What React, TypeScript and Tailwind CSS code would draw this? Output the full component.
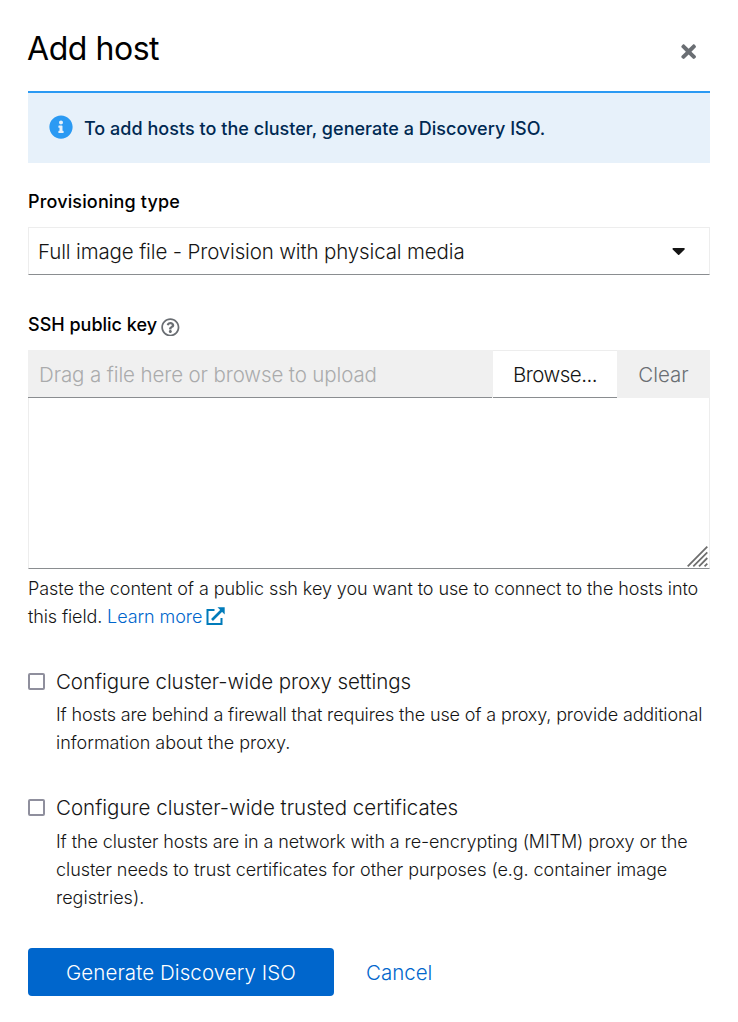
import type { ReactNode } from 'react';
import { FaCaretDown, FaInfoCircle, FaRegQuestionCircle, FaTimes } from 'react-icons/fa';

function ExternalLinkIcon() {
  return (
    <svg className="ml-1 inline-block h-[19px] w-[19px] align-[-3px]" viewBox="0 0 19 19" fill="none">
      <path d="M8.5 3H1.5V17H15.5V11" stroke="#007bba" strokeWidth="2" />
      <path d="M6 13L15.5 3.5" stroke="#007bba" strokeWidth="2.6" />
      <path d="M11.5 0.3H18.7V7.5Z" fill="#007bba" />
    </svg>
  );
}

function ResizeHandle() {
  return (
    <svg className="h-[21px] w-[21px]" viewBox="0 0 21 21" stroke="#6e6e6e" strokeWidth="1.8">
      <path d="M0.7 20.3L20.3 0.7M6.3 20.3L20.3 6.3M12 20.3L20.3 12M17.6 20.3L20.3 17.6" />
    </svg>
  );
}

function CheckboxField({ label, children }: { label: ReactNode; children: ReactNode }) {
  return (
    <label className="grid grid-cols-[17px_1fr] gap-x-[11px]">
      <span className="flex h-[31px] items-center">
        <input
          type="checkbox"
          className="h-[17px] w-[17px] appearance-none rounded-[2px] border-2 border-[#8f8f9d] bg-white"
        />
      </span>
      <span className="text-[20.5px] leading-8">{label}</span>
      <span className="col-start-2 mt-[3px] text-[18px] leading-7">{children}</span>
    </label>
  );
}

export default function App() {
  return (
    <div className="h-[1022px] w-[738px] overflow-hidden whitespace-nowrap bg-white px-7 font-['Inter',sans-serif] font-light text-[#151515]">
      <header className="flex h-[91px] items-start justify-between">
        <h1 className="-ml-px mt-[29px] text-[32px] font-normal leading-10 tracking-[-0.45px] text-black">Add host</h1>
        <button className="mr-[11px] mt-[41px] text-[21.3px] text-[#6a6e73]">
          <FaTimes />
        </button>
      </header>

      <div className="flex h-[72px] border-t-2 border-[#2b9af3] bg-[#e7f1fa] pl-[21px]">
        <FaInfoCircle className="mt-[22px] h-6 w-6 text-[#2b9af3]" />
        <p className="ml-[11px] mt-[22px] text-[18px] font-medium leading-7 tracking-[0.03px] text-[#002952]">
          To add hosts to the cluster, generate a Discovery ISO.
        </p>
      </div>

      <div className="mt-[25px] h-[39px] text-[18px] font-medium leading-7 tracking-[0.15px] text-black">Provisioning type</div>
      <div className="flex h-12 items-center justify-between border border-[#ededed] border-b-[#8a8d90] pl-[9px] pr-5">
        <span className="pt-0.5 text-[20.5px] tracking-[-0.14px]">Full image file - Provision with physical media</span>
        <FaCaretDown className="text-[21.3px]" />
      </div>

      <div className="mt-9 flex h-[39px] text-[18px] font-medium leading-7 text-black">
        SSH public key
        <FaRegQuestionCircle className="ml-1 mt-[6.5px] h-[18.7px] w-[18.7px] text-[#6a6e73]" />
      </div>
      <div className="flex h-12 text-[20.5px] leading-[50px]">
        <div className="w-[464px] border-b border-[#8a8d90] bg-[#f0f0f0] pl-[11px] tracking-[-0.11px] text-[#aaabac]">
          Drag a file here or browse to upload
        </div>
        <div className="w-px bg-[#f0f0f0]" />
        <button className="w-[124px] border-b border-t border-b-[#8a8d90] border-t-[#ededed] bg-white leading-[48px] tracking-[-0.5px]">
          Browse...
        </button>
        <button className="flex-1 bg-[#f0f0f0] text-[#6a6e73]">Clear</button>
      </div>
      <div className="flex h-[171px] items-end justify-end border-x border-b border-x-[#ededed] border-b-[#8a8d90] pb-[1px] pr-[1px]">
        <ResizeHandle />
      </div>
      <p className="mt-[6px] text-[18px] leading-7">
        <span className="tracking-[-0.08px]">
          Paste the content of a public ssh key you want to use to connect to the hosts into
        </span>
        <br />
        <span className="tracking-[-0.12px]">this field. </span>
        <a className="tracking-[-0.08px] text-[#0066cc]">Learn more</a>
        <ExternalLinkIcon />
      </p>

      <div className="mt-[35px]">
        <CheckboxField label={<span className="tracking-[-0.06px]">Configure cluster-wide proxy settings</span>}>
          <span className="tracking-[-0.14px]">
            If hosts are behind a firewall that requires the use of a proxy, provide additional
          </span>
          <br />
          information about the proxy.
        </CheckboxField>
      </div>
      <div className="mt-[35px]">
        <CheckboxField label={<span className="tracking-[0.02px]">Configure cluster-wide trusted certificates</span>}>
          <span className="block pt-px tracking-[-0.1px]">
            If the cluster hosts are in a network with a re-encrypting (MITM) proxy or the
          </span>
          <span className="block tracking-[-0.06px]">
            cluster needs to trust certificates for other purposes (e.g. container image
          </span>
          registries).
        </CheckboxField>
      </div>

      <footer className="mt-9 flex text-[20.5px]">
        <button className="h-12 w-[306px] rounded-[4px] bg-[#0066cc] pt-0.5 tracking-[0.08px] text-white">
          Generate Discovery ISO
        </button>
        <button className="ml-8 h-12 pt-0.5 text-[#0066cc]">Cancel</button>
      </footer>
    </div>
  );
}
